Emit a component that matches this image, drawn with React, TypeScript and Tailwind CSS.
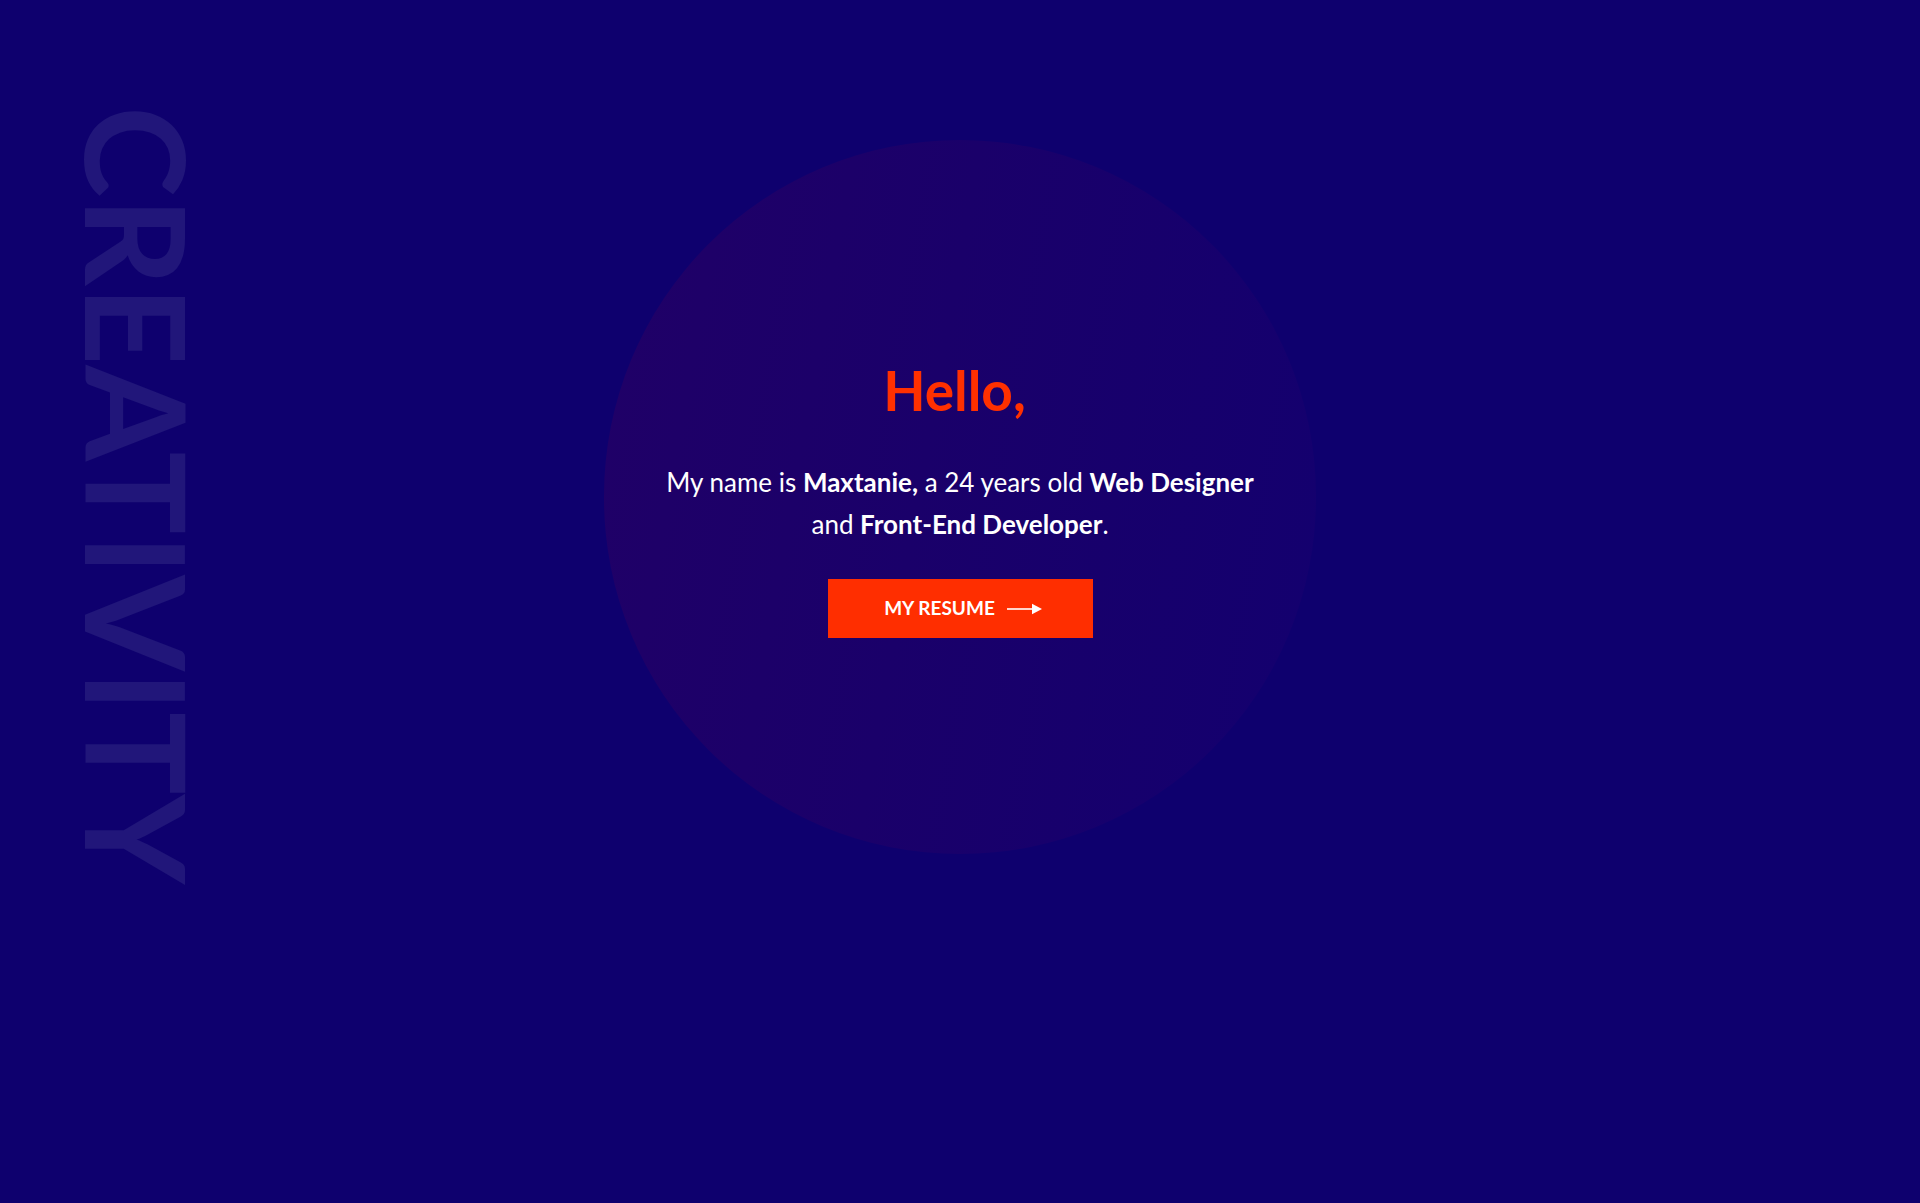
import React from "react";

export default function App() {
  return (
    <div
      className="relative w-full h-[1203px] overflow-hidden bg-[#0e006e]"
      style={{ fontFamily: "Lato, 'Open Sans', sans-serif" }}
    >
      <div className="absolute left-[69px] top-[106px] [writing-mode:vertical-rl] text-[138px] leading-[138px] font-bold text-[#21167a] select-none">
        CREATIVITY
      </div>

      <div className="pt-[140px] flex justify-center">
        <div className="w-[712px] h-[714px] rounded-full bg-[linear-gradient(100deg,#200067_0%,#1a006a_45%,#13006f_100%)] flex flex-col items-center pt-[223px]">
          <h1 className="pr-[11px] text-[55px] leading-[55px] font-bold text-[#ff3000]">Hello,</h1>
          <p className="mt-[43px] text-[26px] leading-[42px] text-white text-center">
            My name is <b className="font-bold">Maxtanie,</b> a 24 years old{" "}
            <b className="font-bold">Web Designer</b>
            <br />
            and <b className="font-bold">Front-End Developer</b>.
          </p>
          <a
            href="#"
            className="mt-[34px] w-[265px] h-[59px] bg-[#ff2e00] flex items-center justify-center gap-[12px] pl-[6px] text-white font-bold text-[19px] uppercase"
          >
            <span>My Resume</span>
            <svg width="35" height="12" viewBox="0 0 35 12" fill="none">
              <line x1="0" y1="6" x2="26" y2="6" stroke="white" strokeWidth="1.6" />
              <path d="M25 0.8 L35 6 L25 11.2 Z" fill="white" />
            </svg>
          </a>
        </div>
      </div>
    </div>
  );
}
